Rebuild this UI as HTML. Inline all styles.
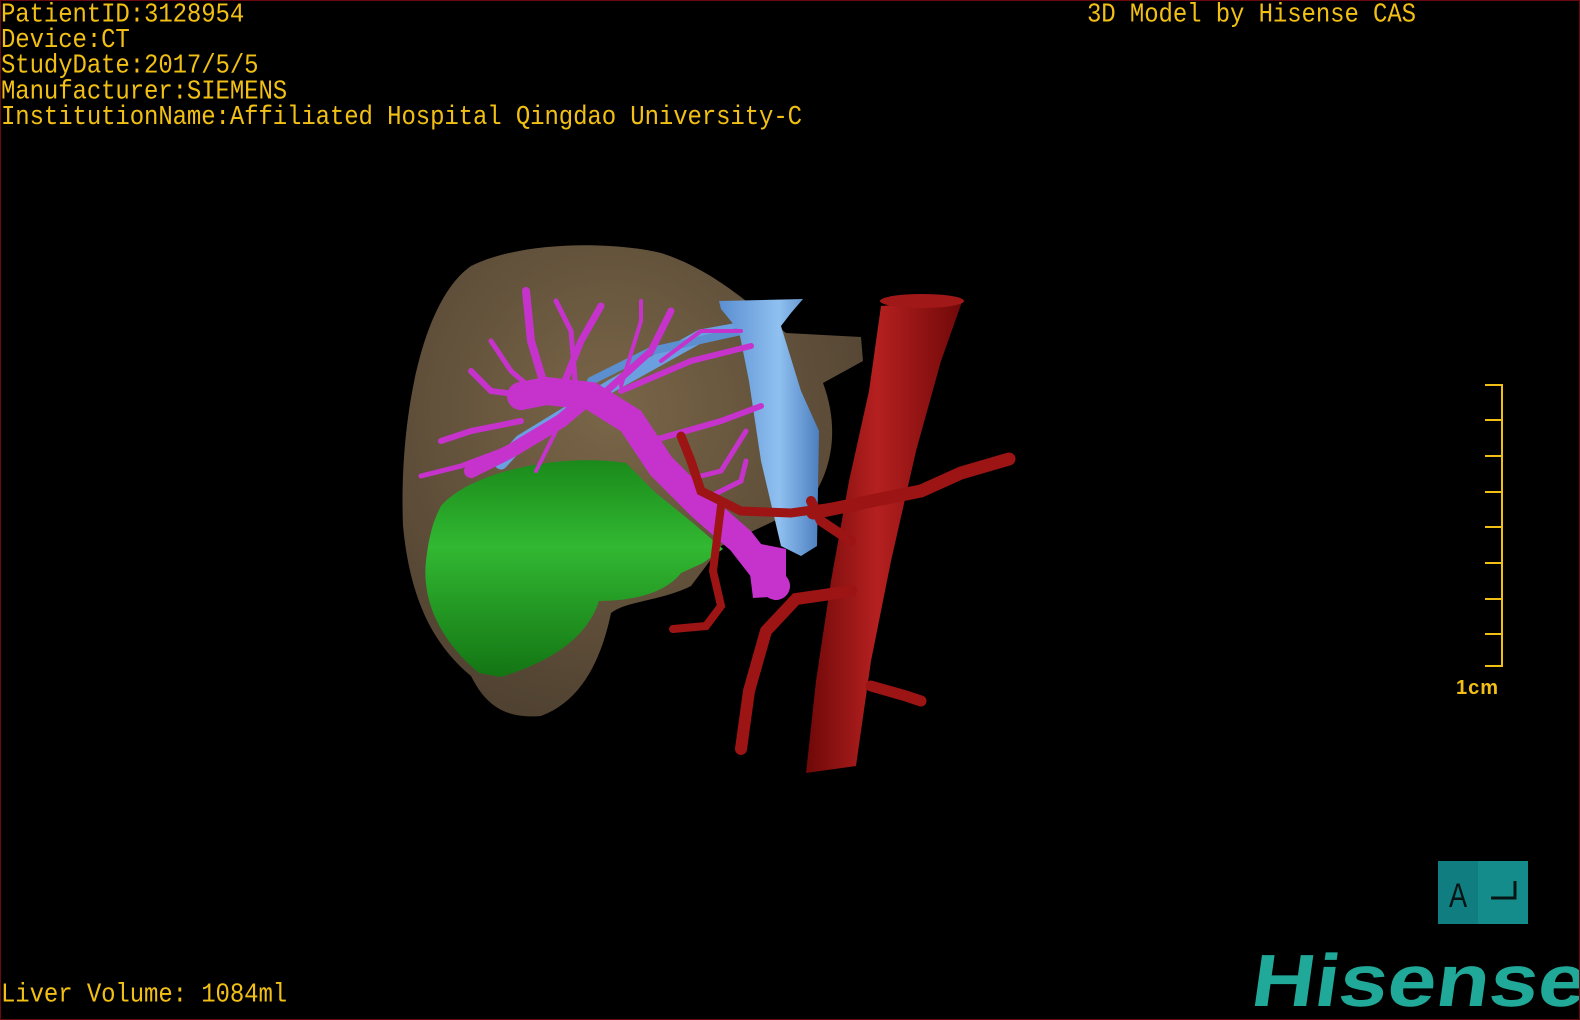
<!DOCTYPE html>
<html><head><meta charset="utf-8"><style>
html,body{margin:0;padding:0;background:#000;}
#w{position:relative;width:1580px;height:1020px;background:#000;overflow:hidden;box-sizing:border-box;border:1px solid #6a0a10;}
.t{position:absolute;font-family:"Liberation Mono",monospace;font-size:24px;color:#f2c014;white-space:pre;line-height:23.2px;letter-spacing:-0.1px;transform:scaleY(1.1);transform-origin:0 0;}
</style></head><body><div id="w">
<div class="t" style="left:0;top:2px">PatientID:3128954
Device:CT
StudyDate:2017/5/5
Manufacturer:SIEMENS
InstitutionName:Affiliated Hospital Qingdao University-C</div>
<div class="t" style="left:1086px;top:2px">3D Model by Hisense CAS</div>
<div class="t" style="left:0;top:982px">Liver Volume: 1084ml</div>

<svg width="1580" height="1020" style="position:absolute;left:0;top:0">
<defs>
<radialGradient id="lv" cx="0.45" cy="0.35" r="0.7"><stop offset="0" stop-color="#7a6648"/><stop offset="1" stop-color="#4e4030"/></radialGradient>
<linearGradient id="gr" x1="0" y1="0" x2="0" y2="1"><stop offset="0" stop-color="#1a8a1a"/><stop offset="0.4" stop-color="#32b832"/><stop offset="1" stop-color="#137513"/></linearGradient>
<linearGradient id="ao" x1="0" y1="0" x2="1" y2="0"><stop offset="0" stop-color="#6e0808"/><stop offset="0.45" stop-color="#b52020"/><stop offset="1" stop-color="#700808"/></linearGradient>
<linearGradient id="bl" x1="0" y1="0" x2="1" y2="0"><stop offset="0" stop-color="#5a8ed0"/><stop offset="0.6" stop-color="#8fc0f0"/><stop offset="1" stop-color="#4d7fc0"/></linearGradient>
</defs>
<path d="M402,525 C398,420 420,300 470,265 C520,240 610,240 660,252 C710,268 745,300 785,332 L860,336 L862,360 L822,382 C840,430 830,475 805,505 L720,545 L690,585 C660,600 625,600 610,612 C600,660 580,700 540,715 C505,718 485,705 470,675 C440,650 410,610 402,525 Z" fill="url(#lv)"/>
<path d="M440,505 C470,470 560,452 625,462 L655,492 L692,522 L722,548 L702,562 L680,572 C662,595 625,600 598,600 C585,640 545,662 500,676 L478,672 C445,645 420,605 425,560 C428,535 432,520 440,505 Z" fill="url(#gr)"/>
<g fill="none" stroke-linecap="round">
<path d="M770,322 L700,335 L610,385 L520,440 L500,462" stroke="#6a9fe0" stroke-width="13"/>
<path d="M740,330 L650,350 L590,380" stroke="#5b8fd0" stroke-width="8"/>
</g>
<path d="M718,300 L802,298 L790,312 L780,325 L800,390 L818,430 L816,545 L800,555 L780,545 L760,460 L748,380 L738,330 L720,308 Z" fill="url(#bl)"/>
<g fill="none" stroke="#c633cc" stroke-linecap="round">
<path d="M775,585 L740,540 L700,505 L660,465 L630,420 L590,395 L545,390 L520,395" stroke-width="28"/>
<path d="M590,395 L560,420 L510,450 L470,470" stroke-width="14"/>
<path d="M545,390 L530,340 L525,290" stroke-width="8"/>
<path d="M560,390 L580,340 L600,305" stroke-width="7"/>
<path d="M600,395 L650,350 L670,310" stroke-width="7"/>
<path d="M620,390 L690,360 L750,345" stroke-width="6"/>
<path d="M650,440 L720,420 L760,405" stroke-width="6"/>
<path d="M680,480 L720,470 L745,430" stroke-width="5"/>
<path d="M700,500 L740,480 L745,460" stroke-width="5"/>
<path d="M530,395 L490,390 L470,370" stroke-width="6"/>
<path d="M520,420 L470,430 L440,440" stroke-width="6"/>
<path d="M500,450 L460,465 L420,475" stroke-width="5"/>
<path d="M545,400 L510,370 L490,340" stroke-width="5"/>
<path d="M575,390 L570,330 L555,300" stroke-width="5"/>
<path d="M620,385 L640,320 L640,300" stroke-width="4"/>
<path d="M660,360 L700,330 L740,330" stroke-width="4"/>
<path d="M560,420 L540,460 L535,470" stroke-width="4"/>
</g>
<path d="M745,540 L785,548 L785,595 L752,597 Z" fill="#c633cc"/>
<path d="M880,305 L962,298 L940,360 L915,450 L890,560 L870,660 L855,765 L805,772 L815,680 L830,580 L848,480 L868,390 Z" fill="url(#ao)"/>
<ellipse cx="921" cy="300" rx="42" ry="7" fill="#a01818"/>
<g fill="none" stroke="#9c1414" stroke-linecap="round">
<path d="M812,512 L870,500 L920,490 L960,472 L1008,458" stroke-width="13"/>
<path d="M850,590 L795,598 L765,630 L748,690 L740,748" stroke-width="12"/>
<path d="M840,505 L790,512 L740,510 L700,490 L690,460 L680,435" stroke-width="9"/>
<path d="M720,505 L712,570 L720,605 L705,625 L672,628" stroke-width="8"/>
<path d="M870,685 L905,695 L920,700" stroke-width="11"/>
<path d="M850,540 L820,520 L810,500" stroke-width="10"/>
</g>
<g stroke="#f2c014" stroke-width="2" fill="none">
<path d="M1501,384 L1501,665"/>
<path d="M1484,384H1502M1484,419H1502M1484,455H1502M1484,491H1502M1484,526H1502M1484,562H1502M1484,598H1502M1484,633H1502M1484,665H1502"/>
</g>
<text x="1455" y="693" font-family="Liberation Sans,sans-serif" font-size="20" font-weight="bold" fill="#f2c014" letter-spacing="1">1cm</text>
<rect x="1437" y="860" width="90" height="63" fill="#107e80"/>
<rect x="1477" y="860" width="50" height="63" fill="#148c8c"/>
<text x="1448" y="906" font-family="Liberation Sans Narrow,Liberation Sans,sans-serif" font-size="34" fill="#061414" transform="translate(1448 0) scale(0.8 1) translate(-1448 0)">A</text>
<path d="M1490,897 L1514,897 L1514,880" stroke="#061414" stroke-width="3" fill="none"/>
<g transform="translate(1248 1005) skewX(-8)">
<text x="0" y="0" font-family="Liberation Sans,sans-serif" font-size="74" font-weight="bold" fill="#20a898" textLength="335" lengthAdjust="spacingAndGlyphs">Hisense</text>
</g>
</svg>
</div></body></html>
